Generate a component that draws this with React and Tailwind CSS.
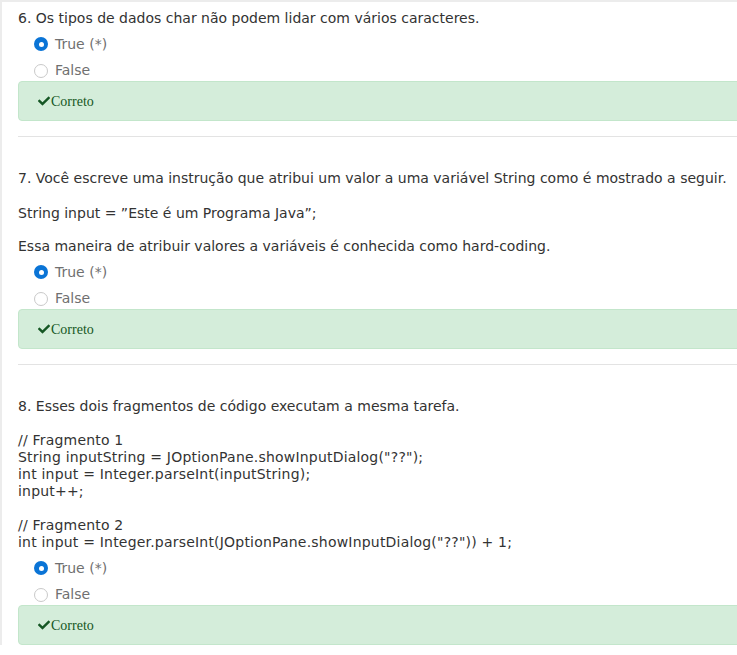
import React from "react";
import { FaCheck } from "react-icons/fa";

const body = { fontFamily: '"DejaVu Sans", Verdana, sans-serif' };

function Radio({ checked, label, h }) {
  return (
    <div className={`flex items-center pl-[16px] ${h}`}>
      {checked ? (
        <span className="w-[14px] h-[14px] rounded-full bg-[#0a74d6] flex items-center justify-center">
          <span className="w-[5px] h-[5px] rounded-full bg-white" />
        </span>
      ) : (
        <span className="w-[14px] h-[14px] rounded-full border border-[#c9c9c9] bg-white" />
      )}
      <span className="ml-[7px] text-[14px] text-[#707070]">{label}</span>
    </div>
  );
}

function Options({ mt }) {
  return (
    <div className={mt}>
      <Radio checked label="True (*)" h="h-[26px]" />
      <Radio label="False" h="h-[24px] pt-[3px]" />
      <div className="h-[40px] rounded-[4px] border border-[#c3e6cb] bg-[#d4edda] flex items-center pl-[19px] text-[#155724]">
        <FaCheck className="w-[12px] h-[12px]" />
        <span className="ml-[1px] text-[14px]" style={{ fontFamily: '"Liberation Serif", "Times New Roman", serif' }}>
          Correto
        </span>
      </div>
    </div>
  );
}

function Sep() {
  return <div className="h-px bg-[#e3e3e3] mt-[15px]" />;
}

export default function App() {
  const code = { fontFamily: '"DejaVu Sans", Tahoma, sans-serif' };
  return (
    <div className="w-[737px] h-[655px] overflow-hidden bg-white" style={body}>
      <div className="w-[780px] border-l-2 border-t-2 border-[#ececec] pl-[16px] pt-[6px] text-[14px] text-[#333333]">
        {/* Q6 */}
        <p className="leading-[20px]">6. Os tipos de dados char não podem lidar com vários caracteres.</p>
        <Options mt="mt-[3px]" />
        <Sep />

        {/* Q7 */}
        <p className="leading-[20px] mt-[31px]">
          7. Você escreve uma instrução que atribui um valor a uma variável String como é mostrado a seguir.
        </p>
        <p className="leading-[20px] mt-[15px]">String input = ”Este é um Programa Java”;</p>
        <p className="leading-[20px] mt-[13px]">Essa maneira de atribuir valores a variáveis é conhecida como hard-coding.</p>
        <Options mt="mt-[3px]" />
        <Sep />

        {/* Q8 */}
        <p className="leading-[20px] mt-[31px]">8. Esses dois fragmentos de código executam a mesma tarefa.</p>
        <div className="mt-[16px] leading-[17px] text-[14px] tracking-[0.2px]" style={code}>
          <div>// Fragmento 1</div>
          <div>String inputString = JOptionPane.showInputDialog("??");</div>
          <div>int input = Integer.parseInt(inputString);</div>
          <div>input++;</div>
          <div className="h-[17px]" />
          <div>// Fragmento 2</div>
          <div>int input = Integer.parseInt(JOptionPane.showInputDialog("??")) + 1;</div>
        </div>
        <Options mt="mt-[4px]" />
      </div>
    </div>
  );
}
